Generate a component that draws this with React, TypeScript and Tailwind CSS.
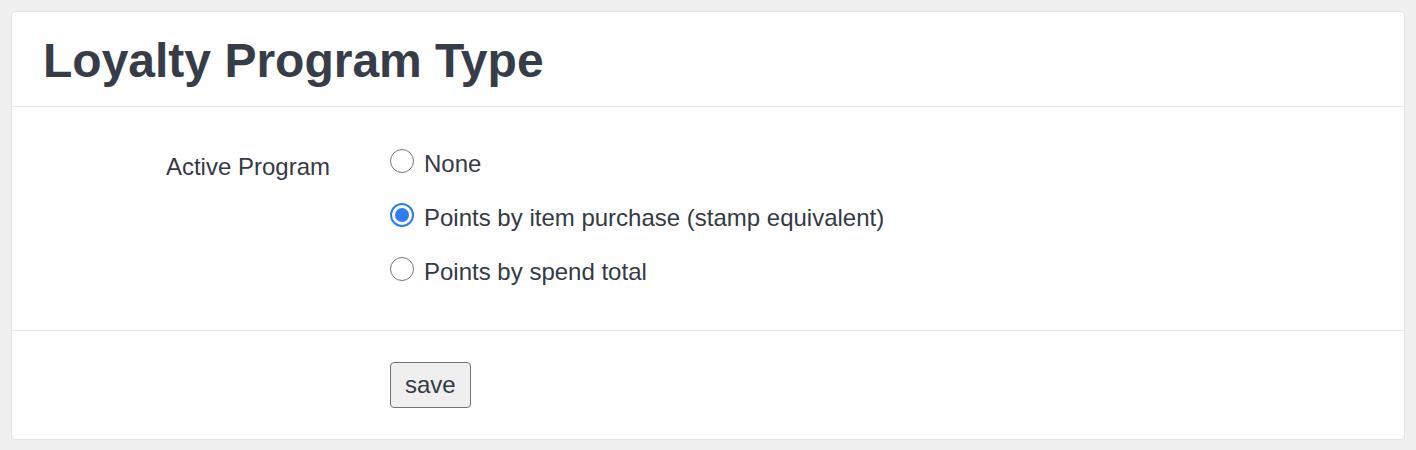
import { useState } from "react";

const options = [
  { id: "none", label: "None" },
  { id: "item", label: "Points by item purchase (stamp equivalent)" },
  { id: "spend", label: "Points by spend total" },
];

function Radio({ checked }: { checked: boolean }) {
  if (checked) {
    return (
      <span className="flex h-[24px] w-[24px] shrink-0 items-center justify-center rounded-full border-2 border-[#2f7bf5] bg-white">
        <span className="block h-[14px] w-[14px] rounded-full bg-[#2f7bf5]" />
      </span>
    );
  }
  return (
    <span className="block h-[24px] w-[24px] shrink-0 rounded-full border-[1.5px] border-[#767676] bg-white" />
  );
}

export default function App() {
  const [program, setProgram] = useState("item");

  return (
    <div
      className="min-h-[450px] bg-[#f0f0f0] p-[11px] text-[#333a45]"
      style={{ fontFamily: '"Liberation Sans", Arial, sans-serif' }}
    >
      <div className="rounded-[4px] border border-[#e3e3e3] bg-white">
        <div className="border-b border-[#e6e6e6] px-[31px] pt-[25px] pb-[21px]">
          <h1 className="text-[48px] font-bold leading-[48px] text-[#363c48]">
            Loyalty Program Type
          </h1>
        </div>

        <div className="flex border-b border-[#e6e6e6] pt-[39px] pb-[40px]">
          <div className="w-[348px] shrink-0 pr-[30px] pt-[3px] text-right text-[24px] leading-[36px]">
            Active Program
          </div>
          <div className="flex flex-col gap-[18px] pl-[30px]">
            {options.map((o) => (
              <button
                key={o.id}
                type="button"
                onClick={() => setProgram(o.id)}
                className="flex items-center gap-[10px] text-left text-[24px] leading-[36px]"
              >
                <span className="-mt-[6px] block">
                  <Radio checked={program === o.id} />
                </span>
                <span>{o.label}</span>
              </button>
            ))}
          </div>
        </div>

        <div className="flex pt-[31px] pb-[31px]">
          <div className="w-[348px] shrink-0" />
          <div className="pl-[30px]">
            <button
              type="button"
              className="h-[46px] rounded-[4px] border-[1.5px] border-[#737373] bg-[#efefef] px-[14px] text-[24px] leading-[24px] text-[#333a45]"
            >
              save
            </button>
          </div>
        </div>
      </div>
    </div>
  );
}
